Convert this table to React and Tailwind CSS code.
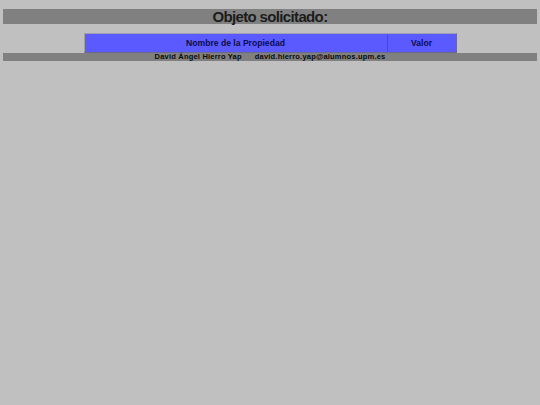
export default function App() {
  return (
    <div className="min-h-[405px] w-[540px] bg-[#c0c0c0] px-[3px] pt-[9px] font-['Liberation_Sans',Arial,sans-serif]">
      <div className="flex h-[15px] items-center justify-center bg-[#808080] text-[15px] font-bold leading-none tracking-[-0.65px] text-[#1c1c1c]">
        Objeto solicitado:
      </div>
      <div className="mt-[9px] flex justify-center">
        <div className="flex h-[20px] w-[373px] border border-[#6a6a8a] border-t-[#a0a0b0] border-l-[#a0a0b0] bg-[#5a5aff]">
          <div className="flex w-[303px] items-center justify-center border-r border-[#4848d0] text-[8.6px] font-bold text-[#0c0c50]">
            Nombre de la Propiedad
          </div>
          <div className="flex flex-1 items-center justify-center text-[8.6px] font-bold text-[#0c0c50]">
            Valor
          </div>
        </div>
      </div>
      <div className="flex h-[8px] items-center justify-center gap-[13px] bg-[#808080] text-[7.5px] font-bold leading-none tracking-[0.2px] text-[#0a0a0a]">
        <span>David Ángel Hierro Yap</span>
        <span>david.hierro.yap@alumnos.upm.es</span>
      </div>
    </div>
  );
}
